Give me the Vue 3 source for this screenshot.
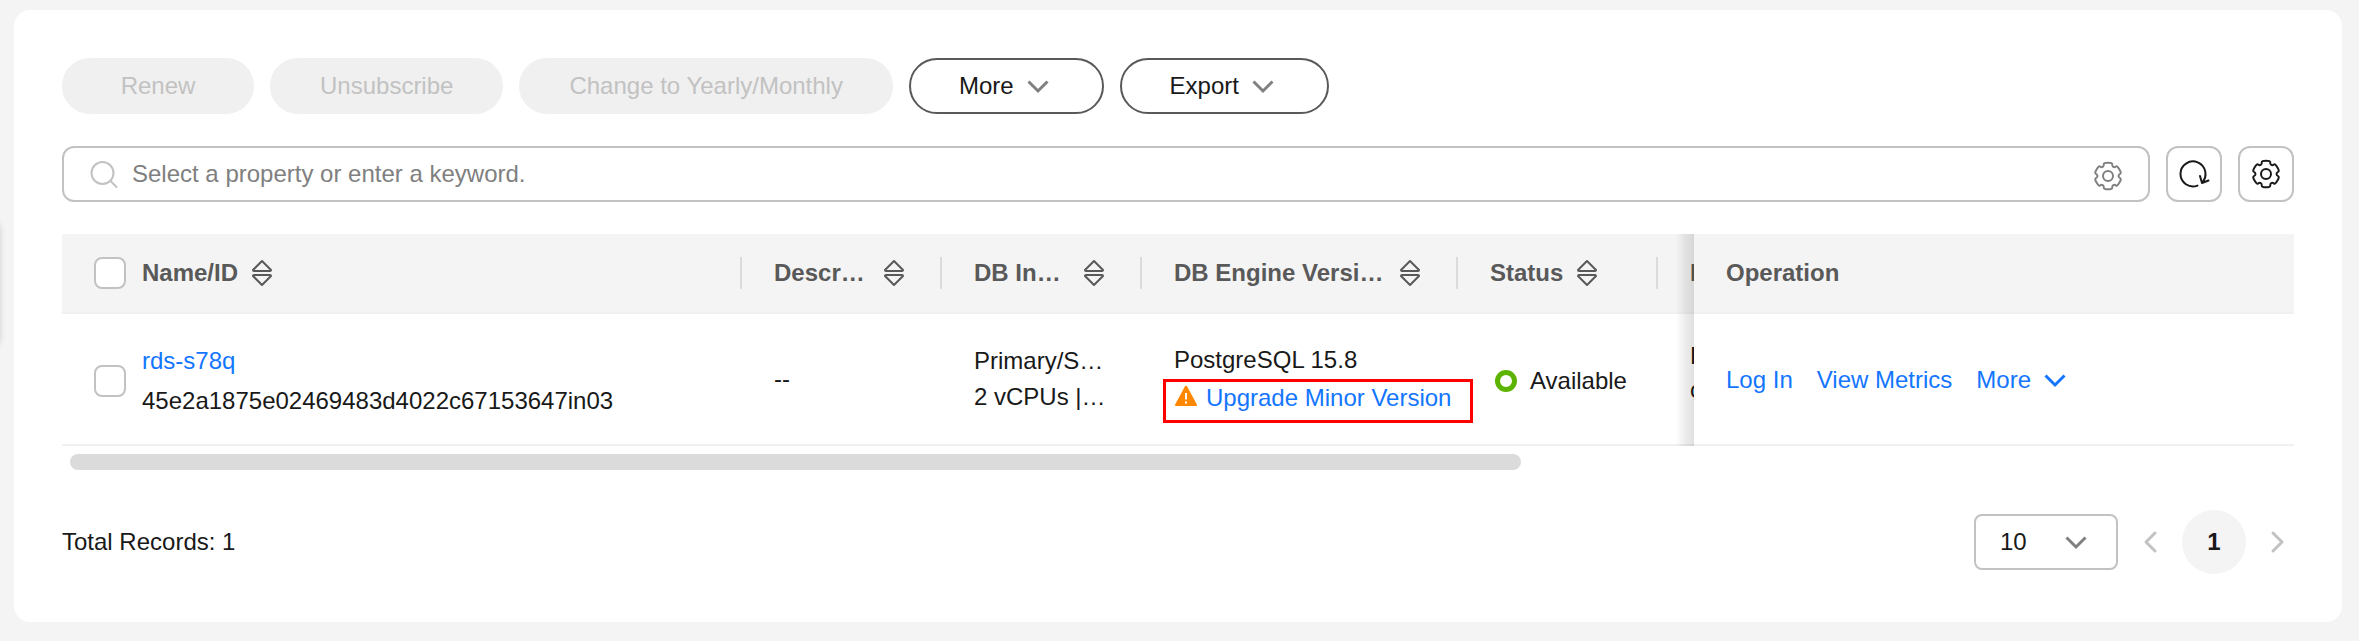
<script setup>
import { ref } from 'vue'

const keyword = ref('')
const pageSize = ref('10')
const allSelected = ref(false)
const rowSelected = ref(false)
const thumbWidth = ref(65.5)

const columns = [
  { key: 'name', label: 'Name/ID' },
  { key: 'desc', label: 'Description' },
  { key: 'type', label: 'DB Instance Type' },
  { key: 'engine', label: 'DB Engine Version' },
  { key: 'status', label: 'Status' },
]

// Six-lobed gear outline, smoothed through the midpoints of its control points
function gearOutline() {
  const pts = []
  for (let k = 0; k < 6; k++) {
    const lobe = -90 + k * 60
    for (const [angle, radius] of [[-19, 14], [19, 14], [22, 10.6], [38, 10.6]]) {
      const a = ((lobe + angle) * Math.PI) / 180
      pts.push([16 + radius * Math.cos(a), 16 + radius * Math.sin(a)])
    }
  }
  const mid = (p, q) => `${((p[0] + q[0]) / 2).toFixed(2)} ${((p[1] + q[1]) / 2).toFixed(2)}`
  let d = `M${mid(pts[pts.length - 1], pts[0])}`
  pts.forEach((p, i) => {
    d += `Q${p[0].toFixed(2)} ${p[1].toFixed(2)} ${mid(p, pts[(i + 1) % pts.length])}`
  })
  return d + 'Z'
}
const gear = gearOutline()
</script>

<template>
  <div class="page">
    <div class="drawer-handle"></div>
    <main class="card">
      <div class="toolbar">
        <button class="btn" type="button" disabled>Renew</button>
        <button class="btn" type="button" disabled>Unsubscribe</button>
        <button class="btn" type="button" disabled>Change to Yearly/Monthly</button>
        <button class="btn" type="button">
          More
          <svg class="icon muted" viewBox="0 0 32 32"><path d="M6.500 11.500L16 21L25.500 11.500" /></svg>
        </button>
        <button class="btn" type="button">
          Export
          <svg class="icon muted" viewBox="0 0 32 32"><path d="M6.500 11.500L16 21L25.500 11.500" /></svg>
        </button>
      </div>

      <div class="search-row">
        <div class="search">
          <svg class="icon faint" viewBox="0 0 32 32"><circle cx="14.500" cy="15" r="11" /><path d="M22.500 23L28.500 29" /></svg>
          <input v-model="keyword" type="text" aria-label="Search" placeholder="Select a property or enter a keyword." />
          <button class="plain" type="button" aria-label="Search settings">
            <svg class="icon muted" viewBox="0 0 32 32"><path :d="gear" /><circle cx="16" cy="16" r="5" /></svg>
          </button>
        </div>
        <button class="square" type="button" aria-label="Refresh">
          <svg class="icon" viewBox="0 0 32 32">
            <path d="M19.500 27.600A12.500 12.500 0 1 1 24 24.600M22 18L24 25L30.500 22.500" />
          </svg>
        </button>
        <button class="square" type="button" aria-label="Table settings">
          <svg class="icon" viewBox="0 0 32 32"><path :d="gear" /><circle cx="16" cy="16" r="5" /></svg>
        </button>
      </div>

      <div class="table-scroll">
        <table>
          <colgroup>
            <col class="w-name" />
            <col class="w-std" />
            <col class="w-std" />
            <col class="w-engine" />
            <col class="w-std" />
            <col class="w-billing" />
            <col class="w-operation" />
          </colgroup>
          <thead>
            <tr>
              <th v-for="c in columns" :key="c.key">
                <div class="head">
                  <input v-if="c.key === 'name'" v-model="allSelected" type="checkbox" aria-label="Select all" />
                  <span class="clip">{{ c.label }}</span>
                  <svg class="icon sort" viewBox="0 0 32 32">
                    <path d="M16 4L25 13Q25 14 24 14H8Q7 14 7 13ZM16 28L25 19Q25 18 24 18H8Q7 18 7 19Z" />
                  </svg>
                </div>
              </th>
              <th><div class="head">Billing Mode</div></th>
              <th class="pinned"><div class="head">Operation</div></th>
            </tr>
          </thead>
          <tbody>
            <tr>
              <td>
                <div class="name-cell">
                  <input v-model="rowSelected" type="checkbox" aria-label="Select rds-s78q" />
                  <div class="tall">
                    <a href="#">rds-s78q</a>
                    <div>45e2a1875e02469483d4022c67153647in03</div>
                  </div>
                </div>
              </td>
              <td>--</td>
              <td>
                <div class="clip">Primary/Standby</div>
                <div class="clip">2 vCPUs | 4 GB</div>
              </td>
              <td>
                <div class="engine">
                  <div>PostgreSQL 15.8</div>
                  <div class="upgrade">
                    <svg class="warn" viewBox="0 2 24 24">
                      <path class="warn-fill" d="M12 2.500L22 21H2Z" />
                      <path class="warn-mark" d="M12 9V15.500M12 17.500V19.500" />
                    </svg>
                    <a href="#">Upgrade Minor Version</a>
                    <span class="highlight"></span>
                  </div>
                </div>
              </td>
              <td>
                <div class="status"><span class="ring"></span>Available</div>
              </td>
              <td>
                <div class="billing">
                  <div>Pay-per-use</div>
                  <div>created on</div>
                </div>
              </td>
              <td class="pinned">
                <div class="actions">
                  <a href="#">Log In</a>
                  <a href="#">View Metrics</a>
                  <button class="plain link" type="button">
                    More
                    <svg class="icon" viewBox="0 0 32 32"><path d="M6.500 11.500L16 21L25.500 11.500" /></svg>
                  </button>
                </div>
              </td>
            </tr>
          </tbody>
        </table>
      </div>
      <div class="track"><div class="thumb" :style="{ width: thumbWidth + '%' }"></div></div>

      <footer class="pager">
        <span class="total">Total Records: 1</span>
        <label class="size">
          <select v-model="pageSize" aria-label="Records per page">
            <option>10</option>
            <option>20</option>
            <option>50</option>
          </select>
          <svg class="icon muted" viewBox="0 0 32 32"><path d="M6.500 11.500L16 21L25.500 11.500" /></svg>
        </label>
        <button class="plain" type="button" aria-label="Previous page" disabled>
          <svg class="icon faint thick" viewBox="0 0 32 32"><path d="M21 7L12 16L21 25" /></svg>
        </button>
        <button class="current" type="button">1</button>
        <button class="plain" type="button" aria-label="Next page" disabled>
          <svg class="icon faint thick" viewBox="0 0 32 32"><path d="M11 7L20 16L11 25" /></svg>
        </button>
      </footer>
    </main>
  </div>
</template>

<style>
body {
  background: #f4f4f4;
}
</style>

<style scoped>
.page {
  position: relative;
  padding: 10px 17px 19px 14px;
  font: 24px/36px "Liberation Sans", Arial, sans-serif;
  color: #191919;
}
.page * {
  box-sizing: border-box;
}
.drawer-handle {
  position: absolute;
  left: -20px;
  top: 222px;
  width: 20px;
  height: 124px;
  border-radius: 8px;
  box-shadow: 0 0 6px rgba(0, 0, 0, 0.16);
}
.card {
  padding: 48px;
  border-radius: 16px;
  background: #fff;
}
button,
input,
select {
  margin: 0;
  font: inherit;
  color: inherit;
}
a,
.link {
  color: #1476ff;
  text-decoration: none;
}
.icon {
  flex: none;
  display: block;
  width: 32px;
  height: 32px;
  fill: none;
  stroke: currentColor;
  stroke-width: 2;
  stroke-linecap: round;
  stroke-linejoin: round;
}
.muted {
  color: #808080;
}
.faint {
  color: #c2c2c2;
}
.thick {
  stroke-width: 3;
}
.toolbar {
  display: flex;
  flex-wrap: wrap;
  gap: 16px;
}
.btn {
  display: flex;
  align-items: center;
  justify-content: center;
  gap: 8px;
  min-width: 192px;
  height: 56px;
  padding: 0 48px;
  border: 2px solid #595959;
  border-radius: 28px;
  background: #fff;
}
.btn:disabled {
  border-color: #f0f0f0;
  background: #f0f0f0;
  color: #c2c2c2;
}
.btn .icon,
.size .icon,
.link .icon {
  stroke-width: 3;
  stroke-linecap: butt;
  stroke-linejoin: miter;
}
.search-row {
  display: flex;
  gap: 16px;
  margin: 32px 0;
}
.search {
  flex: 1;
  display: flex;
  align-items: center;
  gap: 12px;
  height: 56px;
  padding: 0 24px;
  border: 2px solid #c2c2c2;
  border-radius: 12px;
}
.search .plain {
  padding-top: 4px;
}
.search input {
  flex: 1;
  min-width: 0;
  padding: 0;
  border: 0;
  outline: 0;
  background: none;
}
.search input::placeholder {
  color: #808080;
  opacity: 1;
}
.square {
  display: grid;
  place-items: center;
  width: 56px;
  height: 56px;
  padding: 0;
  border: 2px solid #c2c2c2;
  border-radius: 12px;
  background: #fff;
}
.plain {
  display: flex;
  align-items: center;
  gap: 8px;
  padding: 0;
  border: 0;
  background: none;
}
.table-scroll {
  overflow-x: auto;
  scrollbar-width: none;
}
table {
  table-layout: fixed;
  width: 3384px;
  border-spacing: 0;
}
.w-name {
  width: 680px;
}
.w-std {
  width: 200px;
}
.w-engine {
  width: 316px;
}
.w-operation {
  width: 600px;
}
th,
td {
  position: relative;
  padding: 0 32px;
  border-bottom: 2px solid #f0f0f0;
  text-align: left;
  white-space: nowrap;
}
th {
  height: 80px;
  background: #f4f4f4;
  color: #595959;
}
td {
  height: 132px;
  background: #fff;
}
th:not(.pinned)::after {
  content: "";
  position: absolute;
  right: 0;
  top: 23px;
  width: 2px;
  height: 32px;
  background: #dbdbdb;
}
.head {
  display: flex;
  align-items: center;
  gap: 8px;
}
.clip {
  overflow: hidden;
  text-overflow: ellipsis;
}
input[type="checkbox"] {
  flex: none;
  appearance: none;
  width: 32px;
  height: 32px;
  border: 2px solid #c2c2c2;
  border-radius: 8px;
  background: #fff;
}
.head input {
  margin-right: 8px;
}
.pinned {
  position: sticky;
  right: 0;
  z-index: 2;
}
.pinned::before {
  content: "";
  position: absolute;
  right: 100%;
  top: 0;
  bottom: -2px;
  width: 18px;
  background: linear-gradient(to left, rgba(0, 0, 0, 0.12), rgba(0, 0, 0, 0.07) 50%, transparent);
}
.name-cell {
  display: flex;
  align-items: center;
  gap: 16px;
  padding-top: 4px;
}
.tall {
  line-height: 40px;
}
.engine {
  line-height: 38px;
}
.upgrade {
  position: relative;
  display: flex;
  align-items: center;
  gap: 8px;
  width: max-content;
}
.warn {
  width: 24px;
  height: 24px;
}
.warn-fill {
  fill: #ff8800;
  stroke: #ff8800;
  stroke-width: 2;
  stroke-linejoin: round;
}
.warn-mark {
  fill: none;
  stroke: #fff;
  stroke-width: 2;
}
.highlight {
  position: absolute;
  inset: 0 -22px -6px -11px;
  z-index: 1;
  border: 3px solid #ff0000;
  pointer-events: none;
}
.status {
  display: flex;
  align-items: center;
  gap: 13px;
  padding: 4px 0 0 5px;
}
.ring {
  flex: none;
  width: 22px;
  height: 22px;
  border: 5px solid #5cb300;
  border-radius: 50%;
}
.billing {
  padding-bottom: 12px;
  line-height: 34px;
}
.actions {
  display: flex;
  gap: 24px;
  padding-top: 2px;
}
.track {
  margin: 8px 8px 40px;
}
.thumb {
  height: 16px;
  border-radius: 8px;
  background: #dbdbdb;
}
.pager {
  display: flex;
  align-items: center;
  gap: 16px;
}
.total {
  flex: 1;
}
.size {
  display: grid;
  align-items: center;
}
.size select {
  grid-area: 1 / 1;
  appearance: none;
  width: 144px;
  height: 56px;
  padding: 0 24px;
  border: 2px solid #c2c2c2;
  border-radius: 8px;
  background: #fff;
}
.size .icon {
  grid-area: 1 / 1;
  justify-self: end;
  margin-right: 26px;
  pointer-events: none;
}
.current {
  width: 64px;
  height: 64px;
  padding: 0;
  border: 0;
  border-radius: 50%;
  background: #f4f4f4;
  font-weight: bold;
}
</style>
